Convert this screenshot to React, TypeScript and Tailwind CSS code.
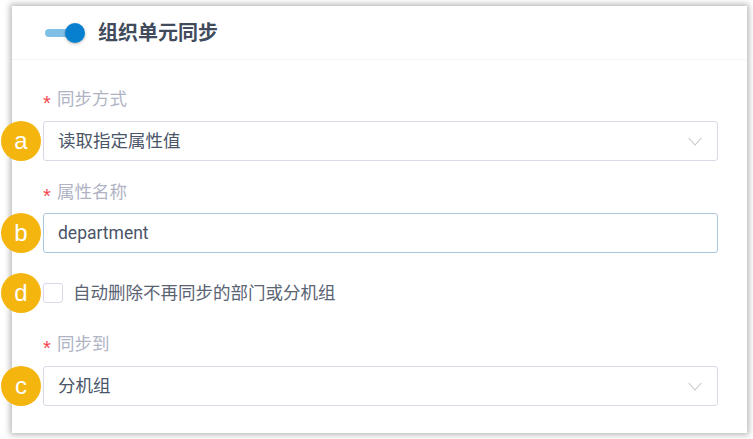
import clsx from "clsx";

const FONT = "font-['Roboto','Noto_Sans_CJK_SC',sans-serif]";

function Badge({ letter, inBorderBox }: { letter: string; inBorderBox?: boolean }) {
  return (
    <span
      className={clsx(
        "absolute top-1/2 flex h-10 w-10 -translate-y-1/2 items-center justify-center rounded-full bg-[#f5b50f] font-['Liberation_Sans',sans-serif] text-[24px] leading-none text-white",
        inBorderBox ? "left-[-42px]" : "left-[-43px]",
      )}
    >
      {letter}
    </span>
  );
}

function FieldLabel({ children }: { children: string }) {
  return (
    <div className="flex h-6 items-center text-[17.5px] text-[#b0b3c4]">
      <span className="mr-[6px] w-2 translate-y-[4px] font-['Liberation_Sans',sans-serif] text-[20px] leading-none text-[#f5454f]">*</span>
      {children}
    </div>
  );
}

function SelectBox({ value, letter }: { value: string; letter: string }) {
  return (
    <div className="relative flex h-10 w-[675px] items-center justify-between rounded-[3px] border border-[#d9d9e8] bg-white pl-[14px] pr-[15px] text-[17.5px] text-[#4a5568]">
      <Badge letter={letter} />
      <span>{value}</span>
      <svg width="14" height="9" viewBox="0 0 14 9" fill="none" stroke="#c4c6cc" strokeWidth="1.1">
        <path d="M0.7 1L7 8L13.3 1" />
      </svg>
    </div>
  );
}

export default function App() {
  return (
    <div className={`h-[439px] w-[753px] overflow-hidden bg-white pl-3 pt-[6px] ${FONT}`}>
      <div className="h-[427px] w-[735px] bg-white shadow-[0_0_6px_2px_rgba(0,0,0,0.28)]">
        <div className="flex h-[54px] items-center border-b border-[#f4f4f6] pl-[33px]">
          <div className="relative mr-[23px] h-2 w-[30px] rounded-full bg-[#80c0e6]">
            <span className="absolute left-5 top-1/2 h-5 w-5 -translate-y-1/2 rounded-full bg-[#0680cf] shadow-[0_1px_3px_rgba(0,0,0,0.3)]" />
          </div>
          <span className="text-[20px] font-bold text-[#414b5b]">组织单元同步</span>
        </div>

        <div className="flex flex-col pl-[31px] pt-[27px]">
          <FieldLabel>同步方式</FieldLabel>
          <div className="mt-[10px]">
            <SelectBox value="读取指定属性值" letter="a" />
          </div>

          <div className="mt-[19px]">
            <FieldLabel>属性名称</FieldLabel>
          </div>
          <div className="relative mt-[9px] flex h-10 w-[675px] items-center rounded-[3px] border border-[#a9c6de] bg-white pl-[14px] text-[17.5px] text-[#4a5568]">
            <Badge letter="b" />
            department
          </div>

          <div className="relative mt-[30px] flex h-5 items-center">
            <Badge letter="d" inBorderBox />
            <span className="h-5 w-5 rounded-[3px] border border-[#d9d9e8] bg-white" />
            <span className="ml-[10px] text-[17.5px] text-[#5a6473]">自动删除不再同步的部门或分机组</span>
          </div>

          <div className="mt-[29px]">
            <FieldLabel>同步到</FieldLabel>
          </div>
          <div className="mt-[10px]">
            <SelectBox value="分机组" letter="c" />
          </div>
        </div>
      </div>
    </div>
  );
}
